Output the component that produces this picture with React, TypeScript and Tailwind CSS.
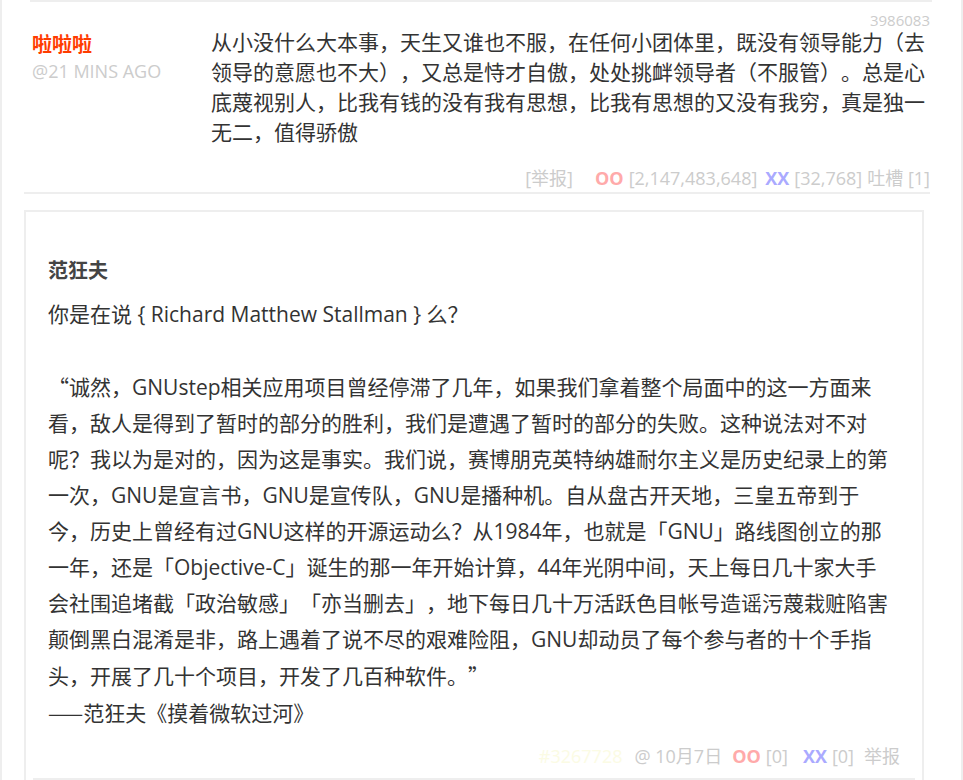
const FONT = "font-['Open_Sans','Noto_Sans_CJK_SC',sans-serif] [text-spacing-trim:space-all]";
const CJK = "font-['Noto_Sans_CJK_SC',sans-serif]";

// line breaks follow the reference's wrapping
const QUOTE_LINES = [
  "诚然，GNUstep相关应用项目曾经停滞了几年，如果我们拿着整个局面中的这一方面来",
  "看，敌人是得到了暂时的部分的胜利，我们是遭遇了暂时的部分的失败。这种说法对不对",
  "呢？我以为是对的，因为这是事实。我们说，赛博朋克英特纳雄耐尔主义是历史纪录上的第",
  "一次，GNU是宣言书，GNU是宣传队，GNU是播种机。自从盘古开天地，三皇五帝到于",
  "今，历史上曾经有过GNU这样的开源运动么？从1984年，也就是「GNU」路线图创立的那",
  "一年，还是「Objective-C」诞生的那一年开始计算，44年光阴中间，天上每日几十家大手",
  "会社围追堵截「政治敏感」「亦当删去」，地下每日几十万活跃色目帐号造谣污蔑栽赃陷害",
  "颠倒黑白混淆是非，路上遇着了说不尽的艰难险阻，GNU却动员了每个参与者的十个手指",
  "头，开展了几十个项目，开发了几百种软件。",
];

function Vote({ oo, xx, gap = "ml-[8px]" }: { oo: string; xx: string; gap?: string }) {
  return (
    <>
      <span className="font-bold text-[#ffaaaa]">OO</span>
      <span className="ml-[5px] text-[#cccccc]">[{oo}]</span>
      <span className={`${gap} font-bold text-[#aaaaff]`}>XX</span>
      <span className="ml-[5px] text-[#cccccc]">[{xx}]</span>
    </>
  );
}

export default function App() {
  return (
    <div className={`${FONT} min-h-[780px] w-[963px] overflow-hidden border-x-2 border-[#eeeeee] bg-white`}>
      <div className="ml-[28px] mr-[29px] h-[2px] bg-[#eeeeee]" />

      {/* first comment */}
      <div className="relative ml-[22px] mr-[31px] border-b-2 border-[#eeeeee]">
        <span className="absolute right-0 top-[11px] text-[15px] leading-none text-[#cccccc]">3986083</span>
        <div className="flex pt-[25px]">
          <div className="w-[187px] shrink-0 pl-[8px] pt-[4px]">
            <div className="text-[20px] font-bold leading-[28px] text-[#ff3c00]">啦啦啦</div>
            <div className="text-[18px] leading-[24px] text-[#cccccc]">@21 MINS AGO</div>
          </div>
          <p className="flex-1 pr-[2px] text-[21px] leading-[30px] text-[#333333]">
            从小没什么大本事，天生又谁也不服，在任何小团体里，既没有领导能力（去领导的意愿也不大），又总是恃才自傲，处处挑衅领导者（不服管）。总是心底蔑视别人，比我有钱的没有我有思想，比我有思想的又没有我穷，真是独一无二，值得骄傲
          </p>
        </div>
        <div className="mt-[19px] flex justify-end pb-[2px] text-[18px] leading-[24px] text-[#cccccc]">
          <span className="mr-[22px]">[举报]</span>
          <Vote oo="2,147,483,648" xx="32,768" />
          <span className="ml-[5px]">吐槽 [1]</span>
        </div>
      </div>

      {/* quoted reply card */}
      <div className="ml-[22px] mt-[16px] w-[900px] border-2 border-b-0 border-[#eeeeee] px-[7px] pt-[7px]">
        <div className="border-b-2 border-[#eeeeee] px-[15px] pt-[34px] pb-[10px] text-[#333333]">
          <div className="text-[20px] font-bold leading-[36px] text-[#444444]">范狂夫</div>
          <div className="mt-[7px] text-[21px] leading-[36px]">
            <p>你是在说 {"{"} Richard Matthew Stallman {"}"} 么？</p>
            <p className="mt-[36px]">
              <span className={CJK}>“</span>
              {QUOTE_LINES.map((line, i) => (
                <span key={i}>
                  {line}
                  {i < QUOTE_LINES.length - 1 ? <br /> : <span className={CJK}>”</span>}
                </span>
              ))}
            </p>
            <p>
              <span className={CJK}>——</span>范狂夫《摸着微软过河》
            </p>
          </div>
          <div className="mt-[13px] flex items-center justify-end text-[18px] leading-[24px] text-[#cccccc]">
            <span className="text-[#fbfbe4]">#3267728</span>
            <span className="ml-[12px] mr-[10px]">@ 10月7日</span>
            <Vote oo="0" xx="0" gap="ml-[15px]" />
            <span className="ml-[10px]">举报</span>
          </div>
        </div>
      </div>
    </div>
  );
}
